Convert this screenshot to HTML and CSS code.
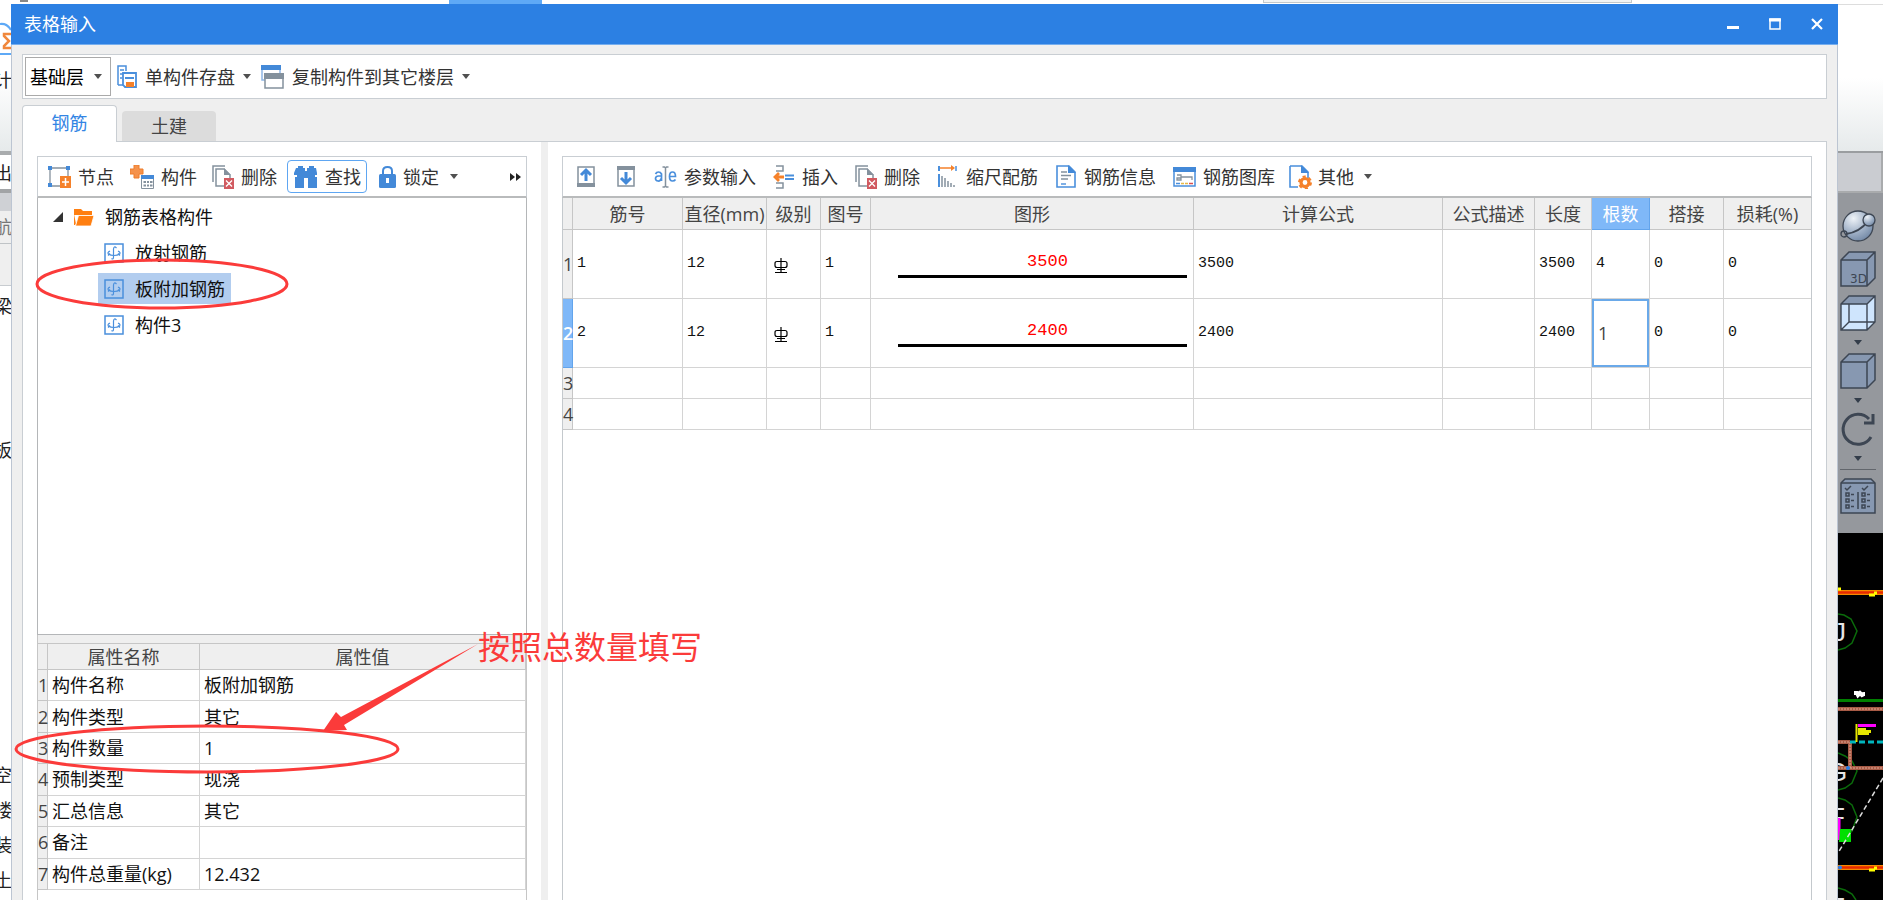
FILE: index.html
```html
<!DOCTYPE html>
<html lang="zh-CN">
<head>
<meta charset="utf-8">
<title>表格输入</title>
<link rel="stylesheet" href="styles.css">
</head>
<body>
<svg class="defs" aria-hidden="true">
  <symbol id="i-delete" viewBox="0 0 22 24"><path d="M1 17V1h12M4 4h8l6 6v11H4z" fill="none" stroke="#84919d" stroke-width="1.5"/><path d="M12 3v7h7z" fill="#84919d"/><rect x="12" y="13" width="10" height="11" fill="#d15a60"/><path d="M14 15.500l6 6M20 15.500l-6 6" stroke="#fff" stroke-width="1.300"/></symbol>
  <symbol id="i-member" viewBox="0 0 20 20"><rect x="1" y="1" width="18" height="18" fill="none" stroke="#4a8fdc" stroke-width="1.500"/><path d="M12.500 5Q10 2.500 9.500 6v8q0 3-2 1.500M6 8q-3 1.500-1.500 3 2 1.500 5.500 1.500t5.500-1.500Q17 9.500 14 8M4 12.500l2-2M16 12.500l-2-2" fill="none" stroke="#4a8fdc" stroke-width="1.200"/></symbol>
  <symbol id="i-rebar" viewBox="0 0 14 16"><path d="M7 0v14M1 14.500h12M3 11.500h8M3 3.500h8q2 0 2 2v2q0 2-2 2H3q-2 0-2-2v-2q0-2 2-2z" fill="none" stroke="#000" stroke-width="1.200"/></symbol>
  <symbol id="i-cube" viewBox="0 0 36 36"><path d="M1 9L9 1h26v26l-8 8H1z" fill="#8798b1"/><path d="M1 9L9 1h26v26l-8 8H1zM1 9h26v26M27 9l8-8" fill="none" stroke="#3d4653" stroke-width="1.500"/></symbol>
</svg>

<div class="backdrop-top"><span class="top-mark"></span><span class="top-tab"></span><span class="top-box"></span></div>
<div class="stage">
  <aside class="edge-left">
    <div class="edge-ribbon">
      <svg class="sigma" viewBox="0 0 11 34"><path d="M0 2q7-1 11 6M0 32h11" fill="none" stroke="#5ea9f6" stroke-width="2"/><path d="M11 12H4v2l5 5-5 5v2h7" fill="none" stroke="#f0873c" stroke-width="2.500"/></svg>
      <span>计</span>
    </div>
    <div class="edge-combo">出</div>
    <div class="edge-gap"></div>
    <div class="edge-nav">航</div>
    <div class="edge-sub"></div>
    <div class="edge-list"><span class="n1">梁</span><span class="n2">板</span><span class="n3">空</span><span>楼</span><span>装</span><span>土</span></div>
  </aside>

  <main class="window">
    <header class="titlebar">
      <h1>表格输入</h1>
      <div class="win-buttons">
        <button aria-label="最小化"><svg width="12" height="12"><path d="M0 9.500h12" stroke="#fff" stroke-width="3"/></svg></button>
        <button aria-label="最大化"><svg width="12" height="12"><path d="M1 1h10v10H1z" fill="none" stroke="#fff" stroke-width="1.500"/><path d="M0 2h12" stroke="#fff" stroke-width="3"/></svg></button>
        <button aria-label="关闭"><svg width="12" height="12"><path d="M1 1l10 10M11 1L1 11" stroke="#fff" stroke-width="2.200"/></svg></button>
      </div>
    </header>

    <div class="topbar">
      <div class="floor"><select aria-label="楼层"><option>基础层</option></select><i class="caret"></i></div>
      <button class="cmd"><svg width="20" height="23" viewBox="0 0 20 23"><path d="M1 20V1h8v5M1 20h5" fill="none" stroke="#4a8fdc" stroke-width="1.500"/><path d="M3 5h4M3 9h3M3 13h2" stroke="#4a8fdc" stroke-width="1.500"/><path d="M6 8h13v14H8l-2-2z" fill="#fff" stroke="#4a8fdc" stroke-width="1.800"/><path d="M8 13h9" stroke="#4a8fdc" stroke-width="2"/><rect x="9" y="17" width="8" height="5" fill="#f5812a"/></svg><span>单构件存盘</span><i class="caret"></i></button>
      <button class="cmd"><svg width="23" height="24" viewBox="0 0 23 24"><path d="M1 1h18v14H1z" fill="#fff" stroke="#8fb7e6" stroke-width="1.500"/><path d="M0 0h20v5H0z" fill="#4389d8"/><path d="M4 9h18v14H4z" fill="#fff" stroke="#84919d" stroke-width="1.500"/><path d="M3 8h20v6H3z" fill="#84919d"/></svg><span>复制构件到其它楼层</span><i class="caret"></i></button>
    </div>

    <nav class="tabs"><button class="tab active">钢筋</button><button class="tab">土建</button></nav>

    <div class="panel">
      <section class="left">
        <div class="tools tools-left">
          <button><svg width="23" height="22" viewBox="0 0 23 22"><path d="M2 2h18v18H2z" fill="none" stroke="#84919d" stroke-width="1.300"/><path d="M0 0h4v4H0zM18 0h4v4h-4zM0 17h4v4H0z" fill="#4389d8"/><rect x="12" y="10" width="11" height="12" fill="#f5812a"/><path d="M17.500 12v8M14 16h7" stroke="#fff" stroke-width="1.500"/></svg>节点</button>
          <button><svg width="24" height="24" viewBox="0 0 24 24"><path d="M4 0h5v4h4v5H9v4H4V9H0V4h4z" fill="#f5924c" stroke="#ee7d2b"/><path d="M11.500 11h12v12.500h-12z" fill="#fff" stroke="#84919d"/><path d="M11 10h13v4H11z" fill="#4389d8"/><path d="M13.500 17h2.500m1 0h2m1 0h2.500M13.500 20.500h2.500m1 0h2m1 0h2.500" stroke="#84919d" stroke-width="1.800"/></svg>构件</button>
          <button><svg width="22" height="24"><use href="#i-delete"/></svg>删除</button>
          <button class="on"><svg width="24" height="23" viewBox="0 0 24 23"><path d="M4 3V1h5v2h2v3h2V3h2V1h5v2h2l1 5v2H0V8l2-5zM1 12h9v11H1zM14 12h9v11h-9zM3 9h18v4H3z" fill="#4389d8"/></svg>查找</button>
          <button class="auto"><svg width="17" height="22" viewBox="0 0 17 22"><path d="M4 9V5q0-4 4.500-4T13 5v4" fill="none" stroke="#4389d8" stroke-width="2"/><rect y="8" width="17" height="14" rx="1.500" fill="#4389d8"/><path d="M8.500 12v5" stroke="#fff" stroke-width="3"/></svg>锁定<i class="caret"></i></button>
          <button class="more" aria-label="更多"><svg width="12" height="8"><path d="M0 0l5 4-5 4zM6 0l5 4-5 4z" fill="#222"/></svg></button>
        </div>
        <div class="tree">
          <div class="node root"><svg width="10" height="10"><path d="M10 0v10H0z" fill="#333"/></svg><svg width="20" height="18" viewBox="0 0 20 18"><path d="M0 1h7l2 2h9v4H0zM0 6l2 10-1 1H0z" fill="#ff7f11"/><path d="M4.500 7.500H20l-3 10.500H1.500z" fill="#ff7f11" stroke="#fff" stroke-width=".8"/></svg><span>钢筋表格构件</span></div>
          <div class="node"><svg width="20" height="20"><use href="#i-member"/></svg><span>放射钢筋</span></div>
          <div class="node selected"><svg width="20" height="20"><use href="#i-member"/></svg><span>板附加钢筋</span></div>
          <div class="node"><svg width="20" height="20"><use href="#i-member"/></svg><span>构件3</span></div>
        </div>
        <div class="props">
          <table>
            <colgroup><col class="p-no"><col class="p-name"><col></colgroup>
            <thead><tr><th></th><th>属性名称</th><th>属性值</th></tr></thead>
            <tbody>
              <tr><th>1</th><td>构件名称</td><td>板附加钢筋</td></tr>
              <tr><th>2</th><td>构件类型</td><td>其它</td></tr>
              <tr><th>3</th><td>构件数量</td><td>1</td></tr>
              <tr><th>4</th><td>预制类型</td><td>现浇</td></tr>
              <tr><th>5</th><td>汇总信息</td><td>其它</td></tr>
              <tr><th>6</th><td>备注</td><td></td></tr>
              <tr><th>7</th><td>构件总重量(kg)</td><td>12.432</td></tr>
            </tbody>
          </table>
        </div>
      </section>

      <div class="splitter"></div>

      <section class="right">
        <div class="tools tools-right">
          <button class="icon" aria-label="上移"><svg width="18" height="21" viewBox="0 0 18 21"><path d="M1 1h16v19H1z" fill="#fff" stroke="#84919d" stroke-width="1.500"/><path d="M0 17h18v4H0z" fill="#84919d"/><path d="M9 15V5M4 9l5-5 5 5" fill="none" stroke="#4389d8" stroke-width="3"/></svg></button>
          <button class="icon" aria-label="下移"><svg width="18" height="21" viewBox="0 0 18 21"><path d="M1 1h16v19H1z" fill="#fff" stroke="#84919d" stroke-width="1.500"/><path d="M0 0h18v4H0z" fill="#84919d"/><path d="M9 6v10M4 12l5 5 5-5" fill="none" stroke="#4389d8" stroke-width="3"/></svg></button>
          <button><svg width="23" height="22" viewBox="0 0 22 22"><path d="M1 8q1-2 3-2t3 2v7M7 10H4q-3 .3-3 2.500T3.500 15 7 12M15 10.500h6q0-4.500-3-4.500t-3 4.500 3 4.500q2 0 3-1.500" fill="none" stroke="#4a8fdc" stroke-width="1.700"/><path d="M8 1h2l1 1 1-1h2M8 21h2l1-1 1 1h2M11 2v18" fill="none" stroke="#84919d" stroke-width="1.500"/></svg>参数输入</button>
          <button><svg width="22" height="24" viewBox="0 0 22 24"><path d="M3 1h7v5H3M3 23h7v-5H3" fill="none" stroke="#84919d" stroke-width="1.500"/><path d="M11 12H4M6 8l-4 4 4 4" fill="none" stroke="#f5812a" stroke-width="2.800"/><path d="M12 10.500h9M12 14h9" stroke="#4a8fdc" stroke-width="2"/></svg>插入</button>
          <button><svg width="22" height="24"><use href="#i-delete"/></svg>删除</button>
          <button><svg width="22" height="23" viewBox="0 0 22 23"><path d="M2 1v5M2 9v13" stroke="#4a8fdc" stroke-width="2"/><path d="M19 1v5" stroke="#4a8fdc" stroke-width="1.500"/><path d="M3 3h13" stroke="#f5812a" stroke-width="1.500"/><path d="M14 0l4 3-4 3z" fill="#f5812a"/><path d="M5 11v11M8 13v9M11 16v6M14 18v4M17 20v2" stroke="#84919d" stroke-width="1.500"/></svg>缩尺配筋</button>
          <button><svg width="22" height="23" viewBox="0 0 22 23"><path d="M2 1h12l6 6v15H2z" fill="#fff" stroke="#4a8fdc" stroke-width="1.600"/><path d="M13 0v8h8z" fill="#4389d8"/><path d="M6 7h6M6 10.500h10M6 14h7" stroke="#84919d" stroke-width="1.400"/><path d="M6 19h5" stroke="#4a8fdc" stroke-width="1.400"/></svg>钢筋信息</button>
          <button><svg width="23" height="20" viewBox="0 0 23 20"><path d="M1 1h21v18H1z" fill="#fff" stroke="#4a8fdc" stroke-width="1.500"/><path d="M0 0h23v5H0z" fill="#4389d8"/><path d="M4 8h4v5H4v-2h4M8 10h11v3" fill="none" stroke="#84919d" stroke-width="1.300"/><path d="M3 16.500h4" stroke="#4a8fdc" stroke-width="1.500"/><path d="M8 16.500h3M12 16.500h3" stroke="#e8b945" stroke-width="1.500"/><path d="M16 16.500h4" stroke="#d95050" stroke-width="1.500"/></svg>钢筋图库</button>
          <button class="auto"><svg width="23" height="24" viewBox="0 0 23 24"><path d="M1 1h12l6 6v6M1 1v21h8" fill="none" stroke="#4a8fdc" stroke-width="1.600"/><path d="M12 0v8h8z" fill="#4389d8"/><circle cx="16" cy="17.500" r="4" fill="#fff" stroke="#f5812a" stroke-width="3.200"/><circle cx="16" cy="17.500" r="6" fill="none" stroke="#f5812a" stroke-width="2" stroke-dasharray="3.200 3.080"/></svg>其他<i class="caret"></i></button>
        </div>
        <table class="grid">
          <colgroup><col class="c-no"><col class="c-id"><col class="c-dia"><col class="c-lv"><col class="c-fig"><col class="c-shape"><col><col class="c-desc"><col class="c-len"><col class="c-cnt"><col class="c-lap"><col class="c-loss"></colgroup>
          <thead><tr><th></th><th>筋号</th><th>直径(mm)</th><th>级别</th><th>图号</th><th>图形</th><th>计算公式</th><th>公式描述</th><th>长度</th><th class="current">根数</th><th>搭接</th><th>损耗(%)</th></tr></thead>
          <tbody>
            <tr class="tall"><th>1</th><td>1</td><td>12</td><td><svg class="rebar" width="14" height="16"><use href="#i-rebar"/></svg></td><td>1</td><td class="shape"><div>3500</div></td><td>3500</td><td></td><td>3500</td><td>4</td><td>0</td><td>0</td></tr>
            <tr class="tall"><th class="current">2</th><td>2</td><td>12</td><td><svg class="rebar" width="14" height="16"><use href="#i-rebar"/></svg></td><td>1</td><td class="shape"><div>2400</div></td><td>2400</td><td></td><td>2400</td><td class="editing"><input value="1" aria-label="根数"></td><td>0</td><td>0</td></tr>
            <tr><th>3</th><td></td><td></td><td></td><td></td><td></td><td></td><td></td><td></td><td></td><td></td><td></td></tr>
            <tr><th>4</th><td></td><td></td><td></td><td></td><td></td><td></td><td></td><td></td><td></td><td></td><td></td></tr>
          </tbody>
        </table>
      </section>
    </div>
  </main>

  <aside class="edge-right">
    <div class="r-ribbon"></div>
    <div class="r-band"></div>
    <div class="view-tools">
      <button aria-label="动态观察"><svg width="36" height="36" viewBox="0 0 36 36"><defs><radialGradient id="ball" cx=".35" cy=".25" r=".8"><stop offset="0" stop-color="#eef3f8"/><stop offset=".6" stop-color="#9fb0c6"/><stop offset="1" stop-color="#7288a5"/></radialGradient></defs><circle cx="18" cy="19" r="15" fill="url(#ball)" stroke="#3d4653" stroke-width="1.300"/><circle cx="4" cy="27" r="3" fill="none" stroke="#3d4653" stroke-width="1.300"/><path d="M6 27q14-2 22-13" fill="none" stroke="#3d4653" stroke-width="2"/><circle cx="29" cy="13" r="6" fill="url(#ball)" stroke="#3d4653" stroke-width="1.300"/></svg></button>
      <button aria-label="三维"><svg width="36" height="36"><use href="#i-cube"/><text x="10" y="32" class="label3d">3D</text></svg></button>
      <button aria-label="线框"><svg width="36" height="36" viewBox="0 0 36 36"><path d="M1 9L9 1h26v26l-8 8H1z" fill="#cfe5fd"/><path d="M1 9L9 1h26l-8 8z" fill="#8798b1"/><path d="M1 9L9 1h26v26l-8 8H1zM1 9h26v26M27 9l8-8M9 9v18h26M9 27l-8 8" fill="none" stroke="#3d4653" stroke-width="1.400"/></svg><i class="caret"></i></button>
      <button aria-label="实体"><svg width="36" height="36"><use href="#i-cube"/></svg><i class="caret"></i></button>
      <button aria-label="旋转"><svg width="36" height="36" viewBox="0 0 36 36"><path d="M31 26A15 15 0 1 1 29 8" fill="none" stroke="#3d4653" stroke-width="3"/><path d="M33 3v9h-9" fill="none" stroke="#3d4653" stroke-width="3"/></svg><i class="caret"></i></button>
      <hr>
      <button aria-label="显示设置"><svg width="36" height="36" viewBox="0 0 36 36"><path d="M1 5l4-4h26l4 4v30H1z" fill="#8798b1" stroke="#3d4653" stroke-width="1.500"/><path d="M1 5h34M18 14v17M5 10l2 2 4-4M22 10l2 2 4-4" fill="none" stroke="#3d4653" stroke-width="1.500"/><path d="M6 15h3v3H6zM6 21h3v3H6zM6 27h3v3H6zM22 15h3v3h-3zM22 21h3v3h-3zM22 27h3v3h-3zM11 16.500h3M11 22.500h3M11 28.500h3M27 16.500h3M27 22.500h3M27 28.500h3" fill="none" stroke="#3d4653" stroke-width="1.500"/></svg></button>
    </div>
    <svg class="cad" viewBox="0 0 45 367" width="45" height="367">
      <rect width="45" height="367" fill="#000"/>
      <g fill="none" stroke="#0b6b0b" stroke-width="1.500"><path d="M0 81l6 1 7 4 6 12-5 12-7 5-7 2"/><path d="M0 220l7 3 7 5 5 10-5 12-7 5-7 2"/><path d="M0 265l7 2 7 5 5 12-5 14-6 6"/><path d="M0 355l7 2 7 4 4 6"/></g>
      <g class="axis"><text x="-5" y="108">J</text><text x="-11" y="248">G</text><text x="-9" y="293">F</text><text x="-9" y="383">F</text></g>
      <path d="M0 59.500h45M0 334.500h45" stroke="#f58a00" stroke-width="5"/><path d="M0 59.500h45M0 334.500h45" stroke="#e62a00" stroke-width="2.500"/>
      <path d="M0 56h3M31 62h6m-1-2h3M31 337h6m-1-2h3" stroke="#ff0" stroke-width="3"/>
      <path d="M16 160h3l1 2 2-2 2 2 2-1h1" fill="none" stroke="#fff" stroke-width="4"/>
      <path d="M0 167.500h45" stroke="#008000" stroke-width="3"/>
      <path d="M0 176h45M0 209h12M12 209v26M0 235h45" fill="none" stroke="#a75b46" stroke-width="4"/>
      <path d="M0 176h45M0 209h12M12 209v26M0 235h45" fill="none" stroke="#e2a793" stroke-width="1" stroke-dasharray="2 1"/>
      <path d="M12 209h33" stroke="#00b6bd" stroke-width="3" stroke-dasharray="6 3"/>
      <path d="M18.500 191v18" stroke="#e6e600" stroke-width="2"/><path d="M20 195h8v2h5v3h-2v2H20z" fill="#e6e600"/><path d="M20 192.500h18" stroke="#f0f" stroke-width="3"/>
      <path d="M1 285v22" stroke="#f0f" stroke-width="3"/><path d="M2 296h11v13H1z" fill="#00e000"/>
      <path d="M45 245L0 320" stroke="#ddd" stroke-width="1.500" stroke-dasharray="5 3"/>
      <circle cx="10" cy="235" r="2" fill="#267fe8"/><circle cx="2" cy="334.500" r="2" fill="#267fe8"/>
    </svg>
  </aside>
</div>

<svg class="markup" width="720" height="900" viewBox="0 0 720 900" aria-hidden="true">
  <g fill="none" stroke="#fb3b3a" stroke-width="3"><ellipse cx="162" cy="284" rx="125" ry="24"/><ellipse cx="207" cy="749" rx="191" ry="23"/></g>
  <path d="M478 644L344 725l3 5-24 1 13-19 5 5z" fill="#fb3b3a"/>
</svg>
<p class="note">按照总数量填写</p>
</body>
</html>
```
FILE: styles.css
```css
* { box-sizing: border-box; }
html, body { height: 100%; }
body {
  margin: 0;
  position: relative;
  display: flex;
  flex-direction: column;
  overflow: hidden;
  background: #fff;
  color: #1a1a1a;
  font: 18px/24px "Open Sans", "Noto Sans CJK SC", sans-serif;
}
button, input, select { font: inherit; color: inherit; }
button {
  display: inline-flex;
  align-items: center;
  padding: 0;
  border: 0;
  background: none;
  white-space: nowrap;
}
svg { flex: none; }
.defs { position: absolute; width: 0; height: 0; }
.caret {
  flex: none;
  width: 8px;
  height: 5px;
  background: #505050;
  clip-path: polygon(0 0, 100% 0, 50% 100%);
}

/* Host application visible behind the dialog */
.backdrop-top { flex: none; display: flex; height: 4px; }
.top-mark { width: 8px; height: 2px; margin-left: 20px; background: #888; }
.top-tab { width: 93px; margin-left: 421px; background: #5ea9f6; }
.top-box { width: 369px; height: 3px; margin-left: 721px; border: 1px solid #c3c8ca; border-top: 0; background: #f1f3f3; }
.stage { flex: 1; display: flex; min-height: 0; }
.edge-left { flex: none; width: 11px; overflow: hidden; display: flex; flex-direction: column; color: #222; }
.edge-left span, .edge-combo, .edge-nav { text-indent: -6px; white-space: nowrap; }
.edge-ribbon { display: flex; flex-direction: column; gap: 12px; height: 147px; padding-top: 18px; background: linear-gradient(#fff 50%, #e6eaeb); }
.sigma { width: 11px; height: 34px; }
.edge-combo { height: 42px; padding-top: 6px; border-top: 4px solid #a9acae; border-bottom: 4px solid #a2a4a6; background: #fff; }
.edge-gap { height: 18px; background: #cfd1d5; }
.edge-nav { height: 33px; padding-top: 4px; border-bottom: 1px solid #bfc3c6; background: #efefef; color: #777; }
.edge-sub { height: 42px; border-bottom: 1px solid #c8ccd0; background: #efefef; }
.edge-list { display: flex; flex-direction: column; gap: 11px; }
.edge-list .n1 { margin-top: 8px; }
.edge-list .n2 { margin-top: 109px; }
.edge-list .n3 { margin-top: 290px; }

/* Dialog */
.window { flex: 1; min-width: 0; display: flex; flex-direction: column; background: #efefef; border: solid #bcc5d2; border-width: 0 1px; }
.titlebar { flex: none; height: 41px; margin: 0 -1px; padding: 0 15px 0 13px; display: flex; align-items: center; justify-content: space-between; background: #2c80e3; border-bottom: 1px solid #76aeee; color: #fff; }
.titlebar h1 { margin: 0; font: inherit; }
.win-buttons { display: flex; gap: 30px; }
.topbar { flex: none; height: 45px; margin: 9px 10px 0; padding: 2px; display: flex; align-items: center; gap: 6px; background: #fff; border: 1px solid #c9ced3; }
.floor { position: relative; display: flex; align-items: center; }
.floor select { width: 86px; height: 39px; padding: 0 0 0 4px; appearance: none; border: 1px solid #aaa; border-radius: 0; background: #fff; color: #000; }
.floor .caret { position: absolute; right: 9px; }
.cmd { gap: 8px; color: #333; }
.cmd + .cmd { margin-left: 4px; }
.tabs { flex: none; display: flex; align-items: flex-end; gap: 5px; margin: 6px 10px 0; }
.tab { justify-content: center; width: 94px; height: 30px; border-radius: 4px 4px 0 0; background: #dcdcdc; color: #444; }
.tab.active { height: 37px; margin-bottom: -1px; padding-bottom: 2px; z-index: 1; border: 1px solid #c9ced3; border-bottom: 0; background: #fff; color: #3385e4; width: 95px; }
.panel { flex: 1; min-height: 0; margin: 0 10px; padding: 14px 14px 0; display: flex; gap: 14px; background: #fff; border: 1px solid #c9ced3; border-bottom: 0; }
.splitter { flex: none; width: 7px; margin-top: -14px; background: #efefef; }
.left { flex: none; width: 490px; display: flex; flex-direction: column; }
.right { flex: 1; min-width: 0; display: flex; flex-direction: column; border: solid #c4c9cd; border-width: 0 1px; }

.tools { flex: none; display: flex; align-items: center; height: 42px; border: 1px solid #c9ced3; border-bottom: 2px solid #b9bbbc; color: #333; }
.tools button { height: 33px; padding: 0 7px; gap: 7px; }
.tools-left { gap: 2px; padding-left: 3px; }
.tools-left button { width: 80px; padding: 0 7px; }
.tools-left .on { border: 1px solid #5ea6f2; border-radius: 4px; padding: 0 6px; }
.tools .auto { width: auto; padding-left: 10px; }
.tools .auto .caret { margin-left: 4px; }
.tools-left .more { width: auto; margin-left: auto; padding: 0 4px; }
.tools-right { gap: 3px; padding-left: 4px; margin: 0 -1px; }
.tools-right .icon { width: 37px; justify-content: center; }
.tools-right .auto { padding-left: 4px; }
.tools-right .auto { gap: 6px; }

.tree { flex: none; height: 437px; padding-top: 4px; border: 1px solid #b4b6b8; border-top: 0; color: #111; }
.node { display: flex; align-items: center; gap: 11px; width: max-content; height: 31px; margin: 0 0 5px 60px; padding: 0 6px; }
.node.root { height: 30px; margin-left: 15px; padding: 0; }
.node.selected { background: #b2cdef; }

table { width: 100%; border-collapse: separate; border-spacing: 0; table-layout: fixed; }
th { padding: 0; font-weight: 400; background: #efefef; color: #444; border: solid #c6c6c6; border-width: 0 1px 1px 0; white-space: nowrap; }
td { padding: 0 4px; border: solid #d4d4d4; border-width: 0 1px 1px 0; white-space: nowrap; }
.props { flex: 1; min-height: 0; padding-top: 8px; border: solid #c6c6c6; border-width: 0 1px; background: linear-gradient(#efefef 8px, #fff 8px); }
.props table { height: 247px; border-top: 1px solid #c6c6c6; color: #111; }
.props thead tr { height: 26px; }
.props tbody tr { height: 31px; }
.p-no { width: 10px; }
.p-name { width: 152px; }

.grid { flex: none; color: #111; }
.grid thead th { height: 32px; }
.grid td, .grid tbody th { height: 31px; }
.grid .tall td, .grid .tall th { height: 69px; }
.grid td { font-family: "Liberation Mono", monospace; font-size: 15px; line-height: 24px; }
.grid .current { background: #7fb8f8; border-color: #62a4ec; color: #fff; font-weight: 600; }
.grid thead .current { font-weight: 400; }
.grid tr > :last-child { border-right: 0; }
.rebar { display: block; margin: 3px 0 0 3px; }
.grid td.shape { padding: 0 6px 0 27px; }
.shape div { height: 28px; padding-left: 10px; border-bottom: 3px solid #000; text-align: center; font-size: 17px; color: #f00; }
.grid td.editing { padding: 0; }
.editing input { display: block; width: 100%; height: 68px; padding: 0 4px; border: 2px solid #6aa9e9; outline: 0; font: 18px/24px "Open Sans", sans-serif; color: #444; background: #fff; }
.c-no { width: 10px; }
.c-id { width: 110px; }
.c-dia { width: 84px; }
.c-lv { width: 54px; }
.c-fig { width: 50px; }
.c-shape { width: 323px; }
.c-desc { width: 92px; }
.c-len { width: 57px; }
.c-cnt { width: 58px; }
.c-lap { width: 74px; }
.c-loss { width: 87px; }

/* Host viewport on the right */
.edge-right { flex: none; width: 45px; overflow: hidden; display: flex; flex-direction: column; }
.r-ribbon { flex: none; height: 149px; border-top: 1px solid #ddd; border-bottom: 2px solid #9a9da0; background: linear-gradient(#fff 50%, #e6eaeb); }
.r-band { flex: none; height: 40px; border: solid #a9abad; border-width: 0 2px 2px 0; background: #caccd1; }
.view-tools { flex: none; height: 340px; padding: 14px 0 0 2px; display: flex; flex-direction: column; gap: 8px; background: #95989d; }
.view-tools button { flex-direction: column; gap: 9px; width: 36px; }
.view-tools .caret { background: #333d4a; }
.view-tools hr { width: 36px; margin: 0; border: 0; border-top: 1px solid #62666c; }
.label3d { font: 12px "DejaVu Sans", sans-serif; fill: #3d4653; }
.cad { display: block; }
.axis { font: 26px "Liberation Sans", sans-serif; fill: #e6e6e6; }

/* Reviewer's marks laid over the dialog */
.markup { position: absolute; left: 0; top: 0; }
.note { position: absolute; left: 478px; top: 627px; margin: 0; font-size: 32px; line-height: 40px; color: #fb3b3a; }
```
